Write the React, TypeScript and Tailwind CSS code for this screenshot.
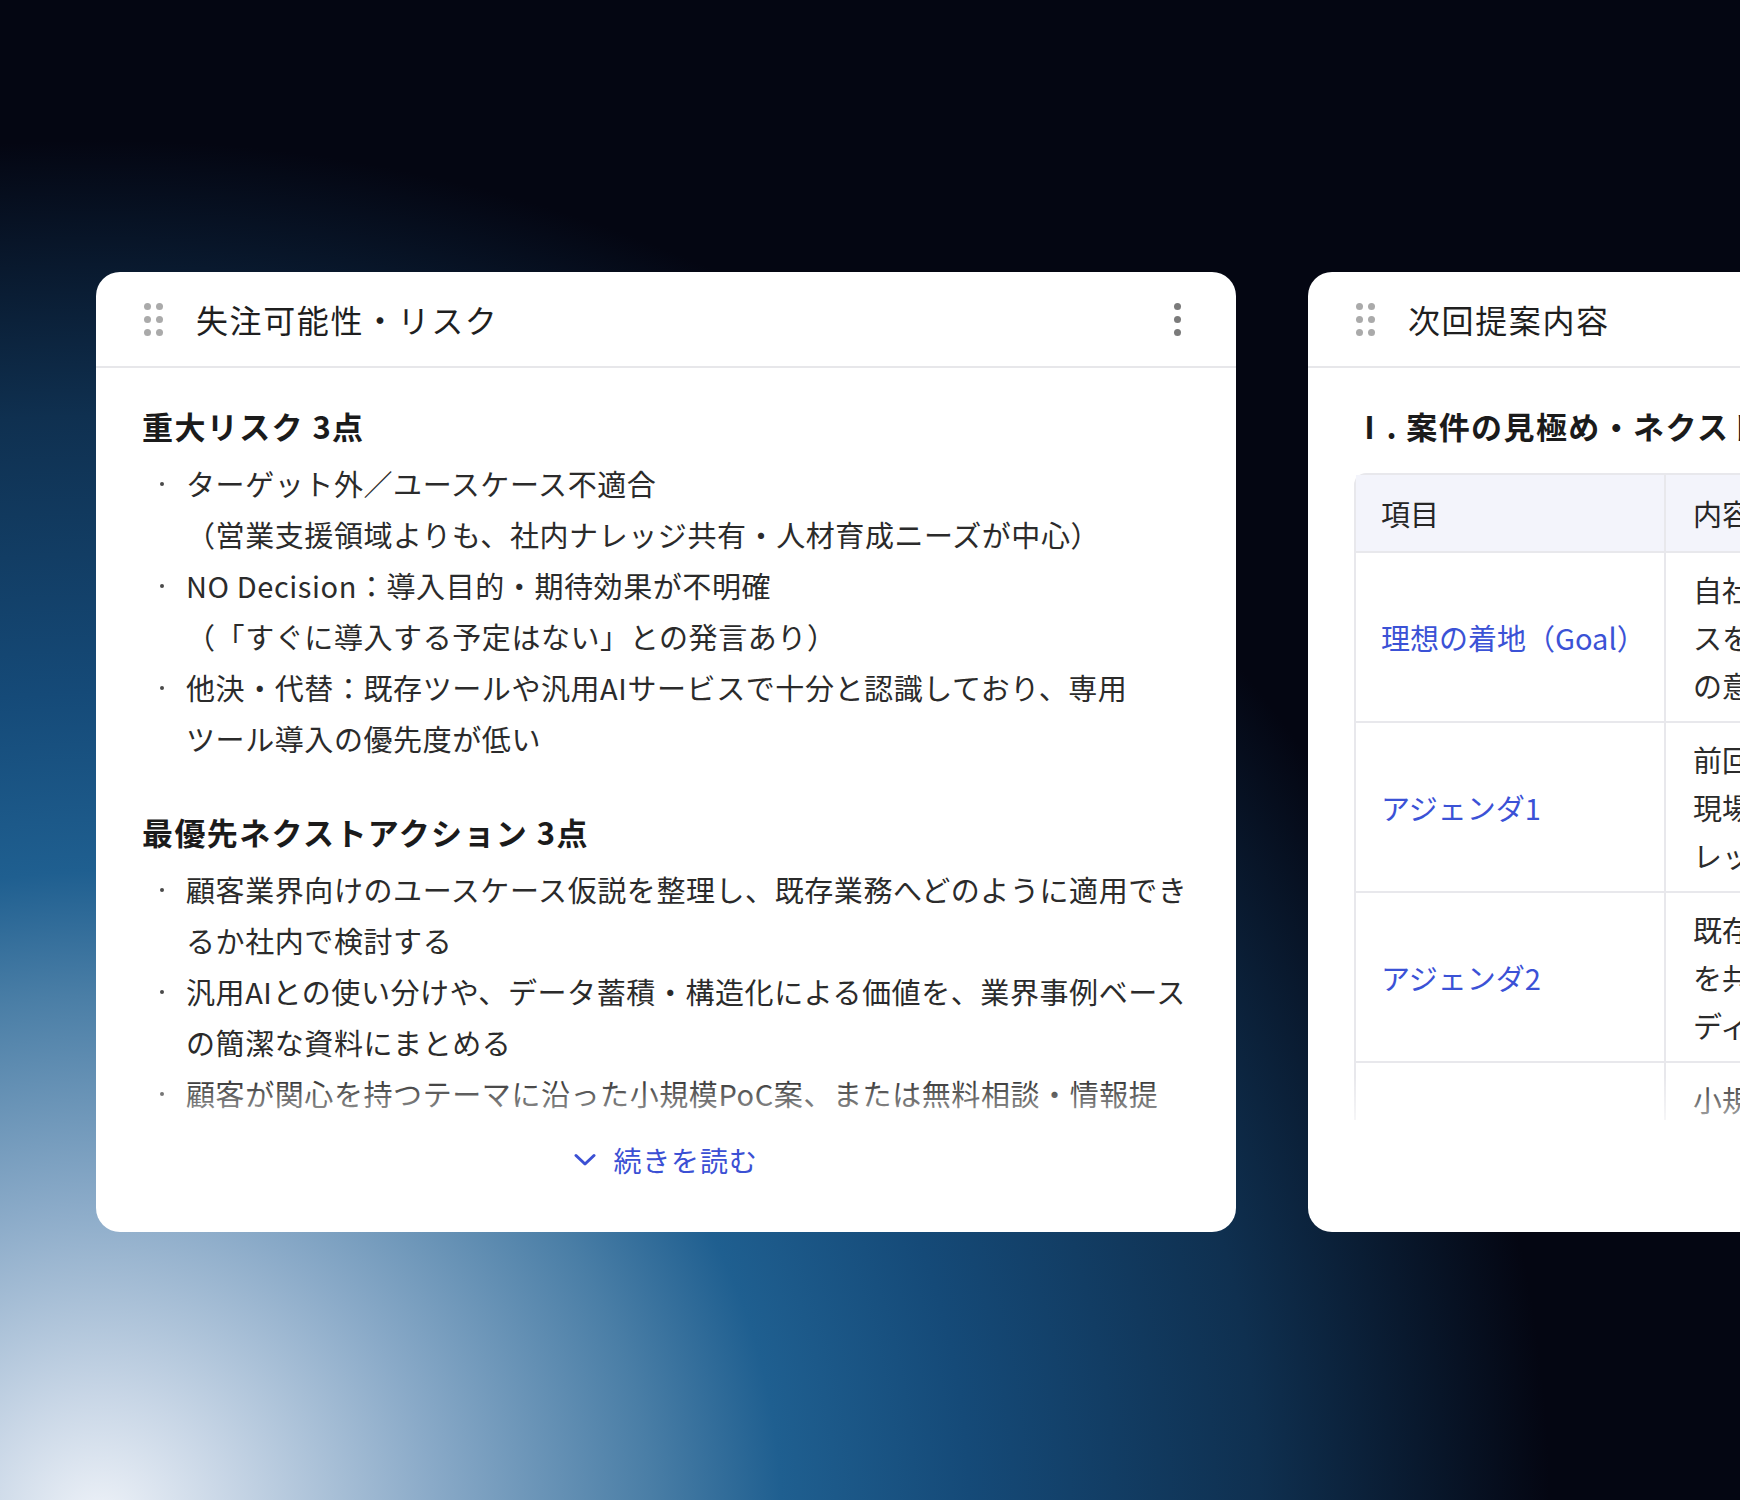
import React from "react";

type Section = {
  heading: string;
  bullets: string[][];
};

const riskSections: Section[] = [
  {
    heading: "重大リスク 3点",
    bullets: [
      [
        "ターゲット外／ユースケース不適合",
        "（営業支援領域よりも、社内ナレッジ共有・人材育成ニーズが中心）",
      ],
      [
        "NO Decision：導入目的・期待効果が不明確",
        "（「すぐに導入する予定はない」との発言あり）",
      ],
      [
        "他決・代替：既存ツールや汎用AIサービスで十分と認識しており、専用",
        "ツール導入の優先度が低い",
      ],
    ],
  },
  {
    heading: "最優先ネクストアクション 3点",
    bullets: [
      [
        "顧客業界向けのユースケース仮説を整理し、既存業務へどのように適用でき",
        "るか社内で検討する",
      ],
      [
        "汎用AIとの使い分けや、データ蓄積・構造化による価値を、業界事例ベース",
        "の簡潔な資料にまとめる",
      ],
      [
        "顧客が関心を持つテーマに沿った小規模PoC案、または無料相談・情報提",
        "供の機会を設け、関係性を維持する",
      ],
    ],
  },
];

const proposalRows = [
  {
    label: "理想の着地（Goal）",
    lines: [
      "自社サービスの活用イメージを具体化し、",
      "スを用いた検証の合意を得る。導入可否",
      "の意思決定者を明確にする。",
    ],
  },
  {
    label: "アジェンダ1",
    lines: [
      "前回ヒアリング内容の振り返りと、",
      "現場で発生している課題の再確認。ナ",
      "レッジ共有の現状を整理する。",
    ],
  },
  {
    label: "アジェンダ2",
    lines: [
      "既存ツールとの使い分けと、蓄積データ",
      "を共有する仕組みの提案。業界事例を交え",
      "ディスカッションを行う。",
    ],
  },
  {
    label: "アジェンダ3",
    lines: [
      "小規模PoCの進め方と、スケジュール",
      "および体制の確認。",
      "次回までの宿題事項の整理。",
    ],
  },
];

function DragHandle() {
  return (
    <div className="grid grid-cols-2 gap-x-[5px] gap-y-[6px]">
      {Array.from({ length: 6 }).map((_, i) => (
        <span key={i} className="size-[7px] rounded-full bg-[#aaaaaa]" />
      ))}
    </div>
  );
}

function MoreMenu() {
  return (
    <button className="flex flex-col items-center gap-[6px] mr-[55px]">
      <span className="size-[7px] rounded-full bg-[#7b7b7b]" />
      <span className="size-[7px] rounded-full bg-[#7b7b7b]" />
      <span className="size-[7px] rounded-full bg-[#7b7b7b]" />
    </button>
  );
}

function ReadMore() {
  return (
    <div className="mt-[20px] flex items-center justify-center gap-[17px] text-[#3b50d4]">
      <svg width="22" height="14" viewBox="0 0 22 14" fill="none">
        <polyline
          points="2,2.5 11,11 20,2.5"
          stroke="currentColor"
          strokeWidth="3"
          strokeLinecap="round"
          strokeLinejoin="round"
        />
      </svg>
      <span className="text-[28px] leading-[40px] tracking-[0.03em]">続きを読む</span>
    </div>
  );
}

function Card({ title, children }: { title: string; children: React.ReactNode }) {
  return (
    <div className="w-[1140px] h-[960px] shrink-0 rounded-[24px] bg-white flex flex-col overflow-hidden">
      {/* Header */}
      <div className="h-[96px] shrink-0 flex items-center border-b-2 border-[#e7e7ea]">
        <div className="ml-[48px]">
          <DragHandle />
        </div>
        <h2 className="ml-[33px] flex-1 text-[32px] font-normal tracking-[0.05em] text-[#1f1f1f]">
          {title}
        </h2>
        <MoreMenu />
      </div>

      {/* Body, clipped with a light fade */}
      <div className="relative h-[752px] shrink-0 overflow-hidden px-[46px] pt-[35px]">
        {children}
        <div className="absolute inset-x-0 bottom-0 h-[44px] bg-gradient-to-b from-white/0 to-white/60" />
      </div>

      <ReadMore />
    </div>
  );
}

function RiskCard() {
  return (
    <Card title="失注可能性・リスク">
      {riskSections.map((section, si) => (
        <div key={si} className={si > 0 ? "mt-[45px]" : ""}>
          <h3 className="text-[31px] leading-[46px] font-bold tracking-[0.045em] text-[#1b1b1b] whitespace-pre">
            {section.heading}
          </h3>
          <ul className="mt-[9px]">
            {section.bullets.map((lines, bi) => (
              <li key={bi} className="flex">
                <span className="h-[51px] w-[44px] shrink-0 flex items-center pl-[18px]">
                  <span className="size-[4px] rounded-full bg-[#4a4a4a]" />
                </span>
                <span className="flex-1 whitespace-nowrap text-[29px] leading-[51px] tracking-[0.02em] text-[#2b2b2b] [text-spacing-trim:space-all]">
                  {lines.map((line, li) => (
                    <React.Fragment key={li}>
                      {li > 0 && <br />}
                      {line}
                    </React.Fragment>
                  ))}
                </span>
              </li>
            ))}
          </ul>
        </div>
      ))}
    </Card>
  );
}

function ProposalCard() {
  return (
    <Card title="次回提案内容">
      <h3 className="text-[31px] leading-[46px] font-bold tracking-[0.045em] text-[#1b1b1b] whitespace-nowrap">
        Ⅰ. 案件の見極め・ネクストアクション
      </h3>
      <div className="mt-[24px] rounded-t-[12px] border-2 border-b-0 border-[#e8e8ec] text-[29px] leading-[48px] [text-spacing-trim:space-all]">
        <div className="grid grid-cols-[310px_1fr] bg-[#f3f4fb] border-b-2 border-[#e8e8ec]">
          <div className="border-r-2 border-[#e8e8ec] pl-[25px] py-[14px] text-[#262626]">項目</div>
          <div className="pl-[27px] py-[14px] text-[#262626]">内容</div>
        </div>
        {proposalRows.map((row, ri) => (
          <div key={ri} className="grid grid-cols-[310px_1fr] border-b-2 border-[#e8e8ec]">
            <div className="border-r-2 border-[#e8e8ec] pl-[25px] py-[12px] flex items-center text-[#3b52d6]">
              {row.label}
            </div>
            <div className="pl-[27px] py-[12px] whitespace-nowrap text-[#2b2b2b]">
              {row.lines.map((line, li) => (
                <div key={li}>{line}</div>
              ))}
            </div>
          </div>
        ))}
      </div>
    </Card>
  );
}

export default function App() {
  return (
    <div
      className="relative w-[1740px] h-[1500px] overflow-hidden bg-[#040612] bg-[radial-gradient(ellipse_1450px_1380px_at_100px_1520px,#eef2f8_0%,#c8d6e6_9%,#8aaac8_23%,#4a7ea6_38%,#1f5f90_47%,#154a78_60%,#0f3050_80%,#040612_100%)]"
      style={{ fontFamily: '"Noto Sans CJK JP", "Noto Sans", sans-serif' }}
    >
      <div className="flex gap-[72px] pl-[96px] pt-[272px]">
        <RiskCard />
        <ProposalCard />
      </div>
    </div>
  );
}
